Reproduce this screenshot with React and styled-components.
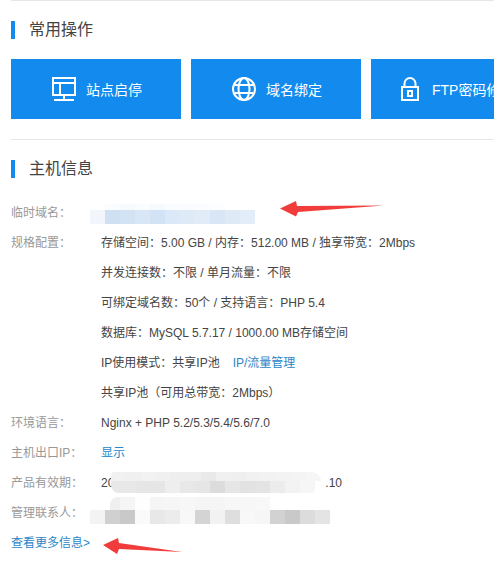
import React from "react";
import styled, { createGlobalStyle } from "styled-components";

const GlobalStyle = createGlobalStyle`
  html, body {
    margin: 0;
    padding: 0;
    background: #fff;
    overflow: hidden;
  }
  body {
    font-family: "Liberation Sans", "Noto Sans CJK SC", sans-serif;
    font-size: 12px;
    color: #444;
  }
`;

const Page = styled.div`
  position: relative;
  width: 494px;
  height: 569px;
  overflow: hidden;
  box-sizing: border-box;
  padding-left: 11px;
`;

const Title = styled.h2`
  margin: 20px 0 0;
  height: 18px;
  line-height: 18px;
  padding-left: 14px;
  border-left: 4px solid #138bee;
  font-size: 16px;
  font-weight: 400;
  color: #444;
`;

const ButtonRow = styled.div`
  display: flex;
  gap: 10px;
  margin-top: 20px;
  width: 600px;
`;

const ActionButton = styled.a`
  flex: 0 0 170px;
  height: 60px;
  display: flex;
  align-items: center;
  justify-content: ${(p) => (p.$cut ? "flex-start" : "center")};
  padding-left: ${(p) => (p.$cut ? "30px" : "2px")};
  box-sizing: border-box;
  gap: ${(p) => (p.$cut ? "13px" : "10px")};
  background: #138bee;
  color: #fff;
  font-size: 14px;
  white-space: nowrap;
`;

const Divider = styled.hr`
  margin: ${(p) => p.$top}px 0 0;
  border: 0;
  border-top: 1px solid #e6e6e6;
`;

const InfoList = styled.div`
  margin-top: 20px;
`;

const Row = styled.div`
  display: flex;
  height: 30px;
  line-height: 30px;
`;

const Label = styled.span`
  width: 90px;
  flex: none;
  color: #999;
`;

const Value = styled.span`
  color: #444;
  white-space: nowrap;
`;

const Redacted = styled.span`
  display: inline-block;
  width: ${(p) => p.$w}px;
`;

const Link = styled.a`
  color: #2a86c8;
  margin-left: ${(p) => p.$gap || 0}px;
`;

const Mosaic = styled.div`
  position: absolute;
  display: flex;
  overflow: hidden;
  left: ${(p) => p.$x}px;
  top: ${(p) => p.$y}px;
  height: ${(p) => p.$h}px;
  border-radius: ${(p) => p.$radius || "0"};
  filter: blur(${(p) => p.$blur || 0}px);
`;

const Tile = styled.div`
  width: ${(p) => p.$w || 15}px;
  height: 100%;
  background: ${(p) => p.$c};
`;

const Arrow = styled.svg`
  position: absolute;
  left: ${(p) => p.$x}px;
  top: ${(p) => p.$y}px;
  filter: blur(0.4px);
`;

const MonitorIcon = () => (
  <svg width="24" height="24" viewBox="0 0 24 24" fill="none" stroke="#fff" strokeWidth="2">
    <path d="M1 1h22v17H1z" />
    <path d="M1 6h22M8 6v12" />
    <path d="M12 18v5M2 23h20" />
  </svg>
);

const GlobeIcon = () => (
  <svg width="24" height="24" viewBox="0 0 24 24" fill="none" stroke="#fff" strokeWidth="2">
    <circle cx="12" cy="12" r="11" />
    <ellipse cx="12" cy="12" rx="5.500" ry="11" />
    <path d="M2.500 8h19M2.500 16h19" />
  </svg>
);

const LockIcon = () => (
  <svg width="18" height="24" viewBox="0 0 18 24" fill="none" stroke="#fff" strokeWidth="2">
    <path d="M1 10h16v13H1z" />
    <path d="M3.500 10V6.500a5.500 5.500 0 0 1 11 0V10" />
    <path d="M7 14h4v5H7z" />
  </svg>
);

const domainTiles = ["#f2f6fc", "#cfe0f3", "#d3e3f4", "#d8e6f6", "#d2e3f5", "#dbe8f7", "#dfeaf7", "#e2ecf8", "#d9e6f6", "#dfeaf7", "#e3edf9"];
const domainHaze = ["#fbfcfe", "#f7fafd", "#fbfcfe", "#f6f9fd", "#fafcfe", "#f9fbfe", "#fbfcfe", "#fcfdfe"];
const expiryTop = ["#f1f1f1", "#f0f0f0", "#f2f2f2", "#f0f0f0", "#eeeeee", "#eeeeee", "#e9e9e9", "#f0f0f0", "#efefef", "#f1f1f1", "#f2f2f2", "#f3f3f3", "#f4f4f4", "#f6f6f6"];
const expiryBottom = ["#e8e8e8", "#e6e6e6", "#e6e6e6", "#eeeeee", "#e8e8e8", "#e6e6e6", "#dcdcdc", "#e6e6e6", "#e2e2e2", "#e4e4e4", "#ececec", "#f2f2f2", "#f6f6f6"];
const contactHaze = ["#efefef", "#f5f5f5", "#fefefe", "#f5f5f5", "#f6f6f6", "#f7f7f7", "#f5f5f5", "#f5f5f5", "#f7f7f7", "#f7f7f7", "#f8f8f8"];
const contactTiles = ["#f3f3f3", "#d0d0d0", "#c9c9c9", "#fafafa", "#e8e8e8", "#ececec", "#f8f8f8", "#d4d4d4", "#f2f2f2", "#dedede", "#f8f8f8", "#f6f6f6", "#d2d2d2", "#c9c9c9", "#dcdcdc", "#e4e4e4"];

export default function App() {
  return (
    <>
      <GlobalStyle />
      <Page>
        <Divider $top={0} />
        <Title>常用操作</Title>
        <ButtonRow>
          <ActionButton>
            <MonitorIcon />
            站点启停
          </ActionButton>
          <ActionButton>
            <GlobeIcon />
            域名绑定
          </ActionButton>
          <ActionButton $cut>
            <LockIcon />
            FTP密码修改
          </ActionButton>
        </ButtonRow>
        <Divider $top={20} />
        <Title>主机信息</Title>
        <InfoList>
          <Row>
            <Label>临时域名：</Label>
          </Row>
          <Row>
            <Label>规格配置：</Label>
            <Value>存储空间：5.00 GB / 内存：512.00 MB / 独享带宽：2Mbps</Value>
          </Row>
          <Row>
            <Label />
            <Value>并发连接数：不限 / 单月流量：不限</Value>
          </Row>
          <Row>
            <Label />
            <Value>可绑定域名数：50个 / 支持语言：PHP 5.4</Value>
          </Row>
          <Row>
            <Label />
            <Value>数据库：MySQL 5.7.17 / 1000.00 MB存储空间</Value>
          </Row>
          <Row>
            <Label />
            <Value>
              IP使用模式：共享IP池
              <Link $gap={13}>IP/流量管理</Link>
            </Value>
          </Row>
          <Row>
            <Label />
            <Value>共享IP池（可用总带宽：2Mbps）</Value>
          </Row>
          <Row>
            <Label>环境语言：</Label>
            <Value>Nginx + PHP 5.2/5.3/5.4/5.6/7.0</Value>
          </Row>
          <Row>
            <Label>主机出口IP：</Label>
            <Link>显示</Link>
          </Row>
          <Row>
            <Label>产品有效期：</Label>
            <Value>
              20
              <Redacted $w={211} />
              .10
            </Value>
          </Row>
          <Row>
            <Label>管理联系人：</Label>
          </Row>
          <Row>
            <Link>查看更多信息&gt;</Link>
          </Row>
        </InfoList>

        <Mosaic $x={105} $y={204} $h={6} $blur={0.5}>
          {domainHaze.map((c, i) => (
            <Tile key={i} $c={c} />
          ))}
        </Mosaic>
        <Mosaic $x={90} $y={210} $h={14}>
          {domainTiles.map((c, i) => (
            <Tile key={i} $c={c} />
          ))}
        </Mosaic>

        <Mosaic $x={111} $y={472} $h={9} $radius="6px 14px 0 0">
          {expiryTop.map((c, i) => (
            <Tile key={i} $c={c} />
          ))}
        </Mosaic>
        <Mosaic $x={111} $y={481} $h={12} $radius="0 0 4px 8px">
          {expiryBottom.map((c, i) => (
            <Tile key={i} $c={c} $w={i === 0 ? 24 : 15} />
          ))}
        </Mosaic>

        <Mosaic $x={110} $y={497} $h={13} $radius="8px 0 0 0">
          {contactHaze.map((c, i) => (
            <Tile key={i} $c={c} $w={i === 0 ? 10 : 15} />
          ))}
        </Mosaic>
        <Mosaic $x={90} $y={510} $h={14}>
          {contactTiles.map((c, i) => (
            <Tile key={i} $c={c} />
          ))}
        </Mosaic>

        <Arrow $x={280} $y={200} width="104" height="18" viewBox="0 0 104 18">
          <path d="M0 8.500 16 1l1 5 87-.5-86 6.500-2 4.500z" fill="#f13c3c" />
        </Arrow>
        <Arrow $x={103} $y={537} width="80" height="18" viewBox="0 0 80 18">
          <path d="M0 8 15 1l1 5 63 9-63-3-2 5z" fill="#f13c3c" />
        </Arrow>
      </Page>
    </>
  );
}
